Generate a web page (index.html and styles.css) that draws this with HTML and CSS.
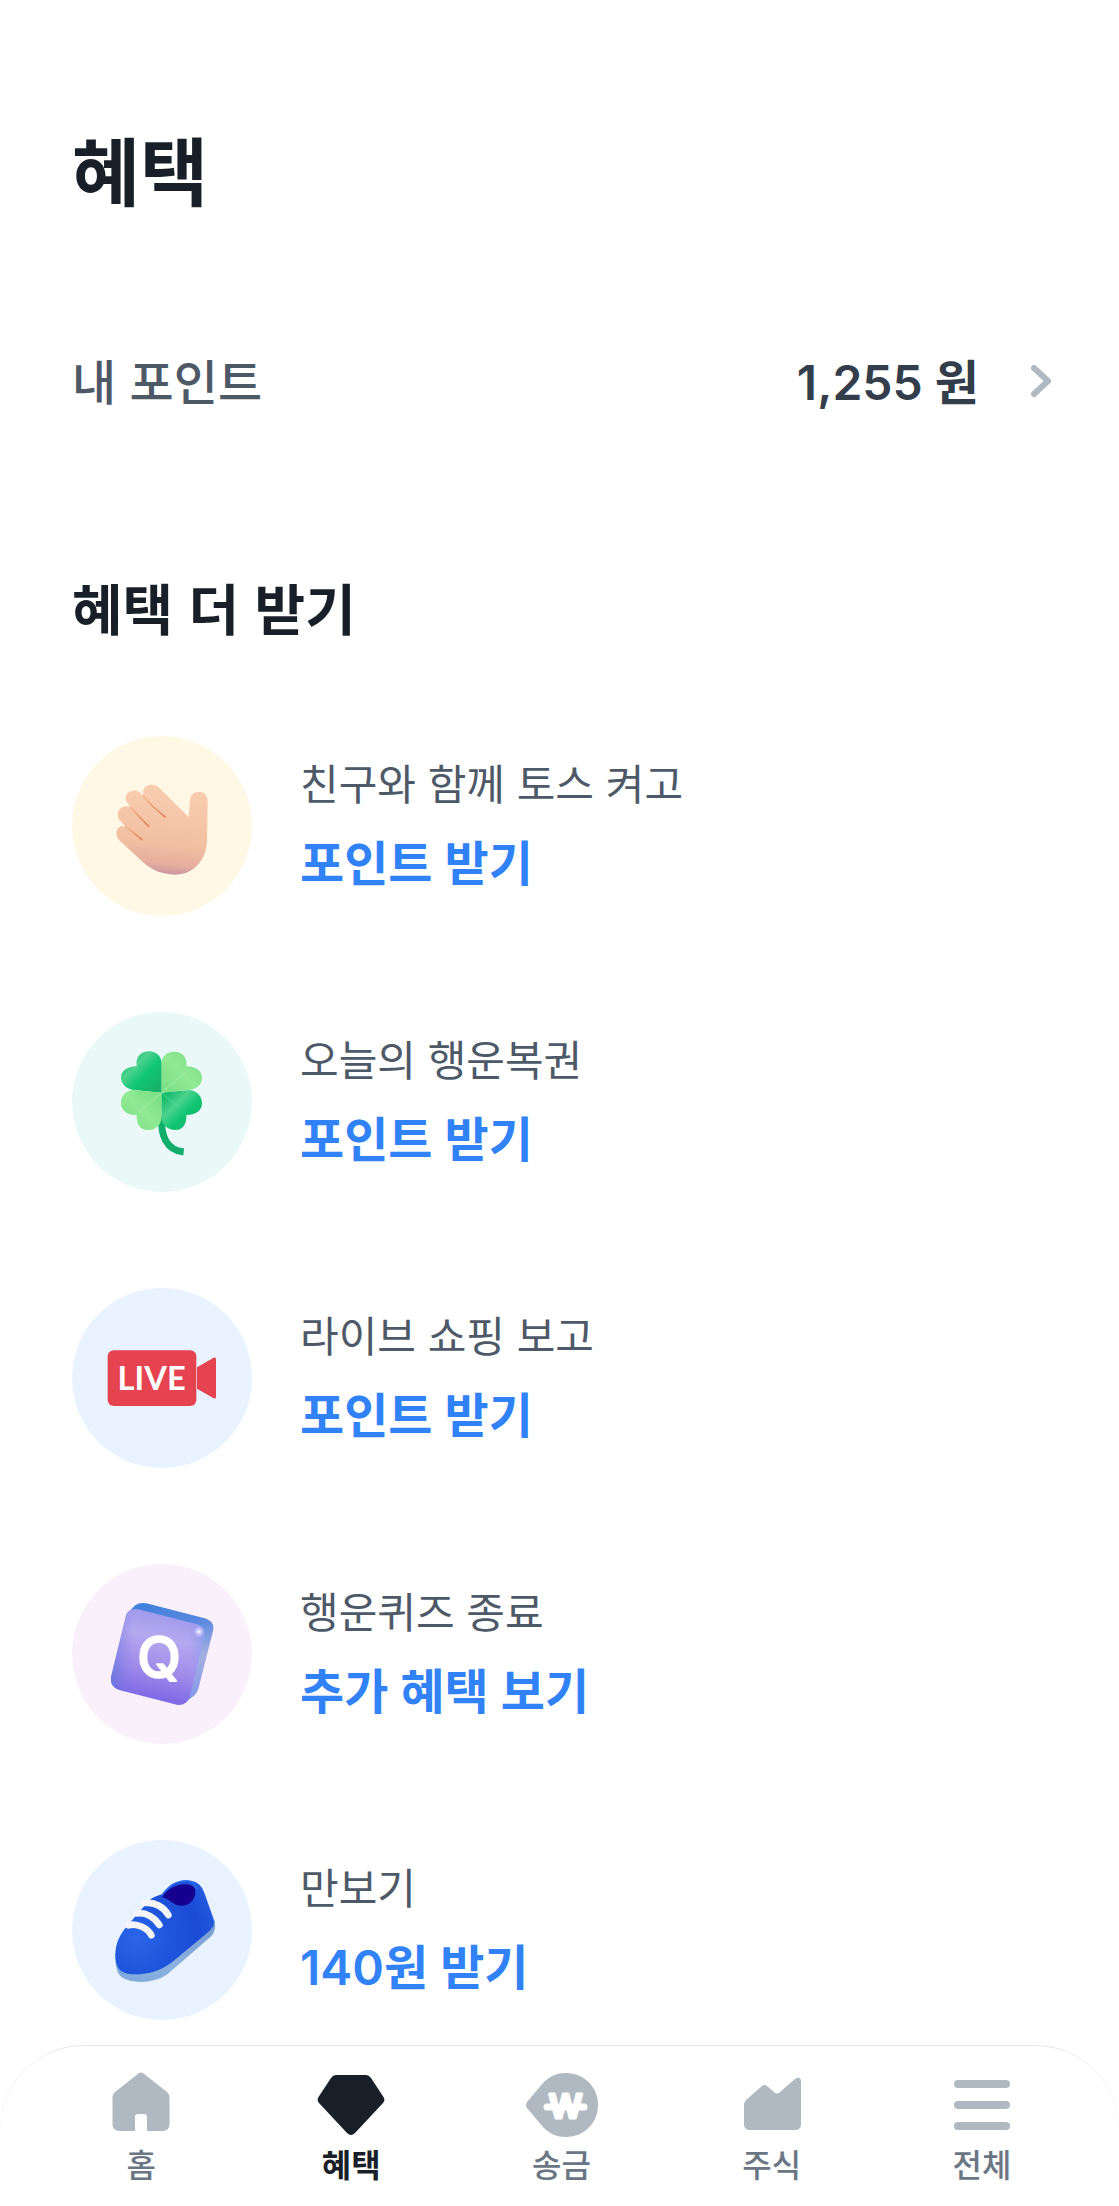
FILE: index.html
```
<!DOCTYPE html>
<html lang="ko">
<head>
<meta charset="UTF-8">
<meta name="viewport" content="width=device-width, initial-scale=1.0">
<title>혜택</title>
<link rel="stylesheet" href="styles.css">
</head>
<body>

<main class="content">
    <h1>혜택</h1>

    <a class="point" href="#">
        <span class="point-label">내 포인트</span>
        <span class="point-amount">1,255 원</span>
        <svg class="chevron" viewBox="0 0 24 36" aria-hidden="true">
            <path d="M3 5 L17 18 L3 31"/>
        </svg>
    </a>

    <h2>혜택 더 받기</h2>
    <ul class="benefits">
        <li>
            <a class="benefit" href="#">
                <svg class="badge yellow" viewBox="36 33 540 540" aria-hidden="true">
                    <defs>
                        <linearGradient id="skin" gradientUnits="userSpaceOnUse" x1="345" y1="220" x2="318" y2="450">
                            <stop offset="0" stop-color="#f8cbae"/>
                            <stop offset="0.6" stop-color="#f2bfa2"/>
                            <stop offset="0.86" stop-color="#e5ae9e"/>
                            <stop offset="1" stop-color="#c8929f"/>
                        </linearGradient>
                        <linearGradient id="crease" x1="0" y1="0" x2="1" y2="1">
                            <stop offset="0" stop-color="#f0b795"/>
                            <stop offset="1" stop-color="#e07f5c"/>
                        </linearGradient>
                    </defs>
                    <path fill="url(#skin)" d="M170 318 C172 305 186 300 198 306 L181 288 C160 262 185 235 212 246 L203 235 C184 211 214 187 239 202 L251 213 C240 186 273 169 296 187 L386 276 L390 226 C392 191 443 191 443 228 L441 350 C438 405 400 449 345 449 C305 448 275 436 246 409 L177 345 C169 336 168 326 170 318 Z"/>
                    <path class="crease" d="M250 212 C258 226 285 251 315 276"/>
                    <path class="crease" d="M210 246 L266 304"/>
                    <path class="crease" d="M197 305 C216 318 230 332 246 344"/>
                </svg>
                <span class="benefit-text">
                    <span class="benefit-desc">친구와 함께 토스 켜고</span>
                    <strong class="benefit-action">포인트 받기</strong>
                </span>
            </a>
        </li>
        <li>
            <a class="benefit" href="#">
                <svg class="badge mint" viewBox="36 36 540 540" aria-hidden="true">
                    <defs>
                        <linearGradient id="leafDark" x1="0" y1="0" x2="1" y2="1">
                            <stop offset="0.1" stop-color="#0fb968"/>
                            <stop offset="0.36" stop-color="#4cd28d"/>
                            <stop offset="0.58" stop-color="#10c574"/>
                            <stop offset="1" stop-color="#17ad67"/>
                        </linearGradient>
                        <linearGradient id="leafLight" x1="0" y1="1" x2="1" y2="0">
                            <stop offset="0" stop-color="#78dd84"/>
                            <stop offset="0.5" stop-color="#91e994"/>
                            <stop offset="1" stop-color="#75dd80"/>
                        </linearGradient>
                    </defs>
                    <path class="stem" d="M305 350 C302 405 319 451 371 456"/>
                    <path fill="url(#leafDark)" d="M305 278 L221 270 C196 267 183 249 183 232 C184 212 203 199 230 199 C226 170 244 154 267 154 C290 154 305 170 305 191 Z"/>
                    <path fill="url(#leafLight)" d="M305 278 L390 269 C414 266 426 250 426 233 C426 213 408 200 379 199 C383 171 366 155 343 155 C320 155 305 169 305 190 Z"/>
                    <path fill="url(#leafLight)" d="M305 278 L219 270 C196 272 183 290 183 309 C183 332 203 346 230 345 C228 373 242 390 263 390 C288 390 304 374 305 350 Z"/>
                    <path fill="url(#leafDark)" d="M305 278 L390 270 C412 272 426 290 426 310 C426 332 407 346 379 345 C381 373 367 390 347 390 C321 389 305 374 305 350 Z"/>
                    <path class="vein" d="M305 278 L375 218 M305 278 L238 335"/>
                    <path class="vein dark" d="M305 278 L355 322"/>
                </svg>
                <span class="benefit-text">
                    <span class="benefit-desc">오늘의 행운복권</span>
                    <strong class="benefit-action">포인트 받기</strong>
                </span>
            </a>
        </li>
        <li>
            <a class="benefit" href="#">
                <svg class="badge blue" viewBox="36 24 540 540" aria-hidden="true">
                    <path class="live-lens" d="M411 262 L461 233 Q468 230 468 238 L468 350 Q468 358 461 355 L411 326 Z"/>
                    <rect class="live-body" x="143" y="211" width="266" height="167" rx="18"/>
                    <text class="live-text" x="275" y="329">LIVE</text>
                </svg>
                <span class="benefit-text">
                    <span class="benefit-desc">라이브 쇼핑 보고</span>
                    <strong class="benefit-action">포인트 받기</strong>
                </span>
            </a>
        </li>
        <li>
            <a class="benefit" href="#">
                <svg class="badge purple" viewBox="36 27 540 540" aria-hidden="true">
                    <defs>
                        <linearGradient id="cubeSide" x1="0.4" y1="0" x2="0.6" y2="1">
                            <stop offset="0" stop-color="#4281dc"/>
                            <stop offset="0.25" stop-color="#5987df"/>
                            <stop offset="0.6" stop-color="#a6afe1"/>
                            <stop offset="1" stop-color="#8398ec"/>
                        </linearGradient>
                        <linearGradient id="cubeFace" x1="0.6" y1="0" x2="0.4" y2="1">
                            <stop offset="0" stop-color="#9c96ec"/>
                            <stop offset="0.3" stop-color="#b5a9ef"/>
                            <stop offset="0.65" stop-color="#9e89ea"/>
                            <stop offset="0.92" stop-color="#806ae5"/>
                            <stop offset="1" stop-color="#779cf3"/>
                        </linearGradient>
                        <linearGradient id="cubeEdge" x1="0" y1="0" x2="1" y2="0">
                            <stop offset="0" stop-color="#557bdc" stop-opacity="0.6"/>
                            <stop offset="0.24" stop-color="#7b75e3" stop-opacity="0"/>
                            <stop offset="0.82" stop-color="#a999f0" stop-opacity="0"/>
                            <stop offset="1" stop-color="#7b9df0" stop-opacity="0.7"/>
                        </linearGradient>
                        <radialGradient id="cubeGlow">
                            <stop offset="0" stop-color="#ffffff"/>
                            <stop offset="0.35" stop-color="#e5e2ff" stop-opacity="0.7"/>
                            <stop offset="1" stop-color="#c5bef5" stop-opacity="0"/>
                        </radialGradient>
                        <path id="face" d="M235 163 L408 207 Q439 215 432 246 L391 419 Q383 454 350 449 L178 405 Q149 396 153 366 L196 188 Q202 158 235 163 Z"/>
                    </defs>
                    <path fill="url(#cubeSide)" d="M226 151 Q240 141 259 145 L431 189 Q466 198 459 229 L415 401 Q410 417 398 425 L376 442 L197 220 L199 177 Z"/>
                    <use href="#face" fill="url(#cubeFace)"/>
                    <use href="#face" fill="url(#cubeEdge)"/>
                    <circle cx="417" cy="230" r="18" fill="url(#cubeGlow)"/>
                    <text class="quiz-text" x="297" y="369">Q</text>
                </svg>
                <span class="benefit-text">
                    <span class="benefit-desc">행운퀴즈 종료</span>
                    <strong class="benefit-action">추가 혜택 보기</strong>
                </span>
            </a>
        </li>
        <li>
            <a class="benefit" href="#">
                <svg class="badge blue" viewBox="36 30 540 540" aria-hidden="true">
                    <defs>
                        <radialGradient id="shoe" gradientUnits="userSpaceOnUse" cx="230" cy="325" r="250">
                            <stop offset="0" stop-color="#2b65ea"/>
                            <stop offset="0.4" stop-color="#1f55dc"/>
                            <stop offset="0.75" stop-color="#1c4bd6"/>
                            <stop offset="1" stop-color="#225bdf"/>
                        </radialGradient>
                        <linearGradient id="sole" x1="0" y1="1" x2="1" y2="0">
                            <stop offset="0" stop-color="#7da8dc"/>
                            <stop offset="0.4" stop-color="#8ab1df"/>
                            <stop offset="1" stop-color="#789bce"/>
                        </linearGradient>
                    </defs>
                    <path fill="url(#sole)" d="M166 370 C166 410 169 433 190 445 C222 461 282 461 322 433 L452 320 C465 308 467 292 464 271 Z"/>
                    <path fill="url(#shoe)" d="M166 374 C167 335 183 309 203 286 L269 210 C283 199 294 198 305 193 C325 167 352 151 380 151 C408 152 423 163 433 188 L461 268 C464 286 458 294 445 306 L334 398 C296 426 258 434 215 433 C178 430 166 410 166 374 Z"/>
                    <path class="shoe-rim" d="M306 198 C324 168 351 152 380 153 C398 154 408 164 413 177"/>
                    <path fill="#160091" d="M306 201 C325 174 350 163 377 163 C398 163 408 174 406 189 C403 211 388 227 365 227 C340 227 331 208 306 201 Z"/>
                    <path class="lace" d="M256 219 C285 215 313 233 325 255"/>
                    <path class="lace" d="M231 250 C260 247 285 263 298 285"/>
                    <path class="lace" d="M205 286 C232 278 264 296 274 316"/>
                </svg>
                <span class="benefit-text">
                    <span class="benefit-desc">만보기</span>
                    <strong class="benefit-action">140원 받기</strong>
                </span>
            </a>
        </li>
    </ul>
</main>

<nav class="tabbar">
    <a class="tab" href="#">
        <svg viewBox="0 0 72 66" aria-hidden="true">
            <path d="M33.500 1.500 Q36 -0.500 38.500 1.500 L62 20 Q64.500 22 64.500 25 V52 Q64.500 59 57.500 59 H42 V45 Q42 42 39 42 H33 Q30 42 30 45 V59 H14.500 Q7.500 59 7.500 52 V25 Q7.500 22 10 20 Z"/>
        </svg>
        <span>홈</span>
    </a>
    <a class="tab active" href="#" aria-current="page">
        <svg viewBox="0 0 72 66" aria-hidden="true">
            <path d="M21 3 H51 Q54 3 56 6 L68.500 25 Q70.500 28 68 31 L40 61 Q36 65 32 61 L4 31 Q1.500 28 3.500 25 L16 6 Q18 3 21 3 Z"/>
        </svg>
        <span>혜택</span>
    </a>
    <a class="tab" href="#">
        <svg viewBox="0 0 72 66" aria-hidden="true">
            <path d="M17 11 C24 4 31 1 40 1 C58 1 72 15 72 33 C72 51 58 65 40 65 C31 65 24 62 17 55 L1 36 Q-1 33 1 30 Z"/>
            <path class="won-bar" d="M21 35 H58"/>
            <text class="won" x="39.500" y="46">W</text>
        </svg>
        <span>송금</span>
    </a>
    <a class="tab" href="#">
        <svg viewBox="0 0 72 66" aria-hidden="true">
            <path d="M8 34 Q8 30 10 28 L26 14 Q28.500 12 31 14 L38 20 Q41 23 44 20 L59 7 Q64 3 65 9 V52 Q65 58 59 58 H14 Q8 58 8 52 Z"/>
        </svg>
        <span>주식</span>
    </a>
    <a class="tab" href="#">
        <svg viewBox="0 0 72 66" aria-hidden="true">
            <path d="M12 8 H60 A4 4 0 0 1 60 16 H12 A4 4 0 0 1 12 8 Z M12 29 H60 A4 4 0 0 1 60 37 H12 A4 4 0 0 1 12 29 Z M12 50 H60 A4 4 0 0 1 60 58 H12 A4 4 0 0 1 12 50 Z"/>
        </svg>
        <span>전체</span>
    </a>
</nav>

</body>
</html>
```
FILE: styles.css
```
* {
    box-sizing: border-box;
}
body {
    display: flex;
    flex-direction: column;
    min-height: 100vh;
    margin: 0;
    background-color: #fff;
    color: #191f28;
    font-family: 'Noto Sans CJK KR', sans-serif;
}
a {
    color: inherit;
    text-decoration: none;
}
.content {
    padding: 120px 64px 0 72px;
}
h1 {
    margin: 0;
    font-size: 74px;
    line-height: 96px;
    font-weight: 700;
}
h2 {
    margin: 151px 0 94px;
    font-size: 55px;
    line-height: 72px;
    font-weight: 700;
}

/* 내 포인트 */
.point {
    display: flex;
    align-items: baseline;
    margin-top: 127px;
    font-size: 48px;
    line-height: 72px;
    font-weight: 500;
}
.point-label {
    flex: 1;
    color: #4e5968;
}
.point-amount {
    color: #333d4b;
    font-family: 'Inter', 'Noto Sans CJK KR', sans-serif;
    font-weight: 600;
}
.chevron {
    align-self: center;
    width: 24px;
    height: 36px;
    margin-left: 52px;
    fill: none;
    stroke: #b0b8c1;
    stroke-width: 6;
    stroke-linecap: round;
    stroke-linejoin: round;
}

/* 혜택 목록 */
.benefits {
    display: flex;
    flex-direction: column;
    gap: 96px;
    margin: 0;
    padding: 0;
    list-style: none;
}
.benefit {
    display: flex;
    align-items: center;
    gap: 48px;
}
.badge {
    flex: none;
    width: 180px;
    height: 180px;
    border-radius: 50%;
}
.yellow {
    background-color: #fff8e5;
}
.mint {
    background-color: #ebf8f8;
}
.blue {
    background-color: #e8f3ff;
}
.purple {
    background-color: #f9f0fc;
}
.benefit-text {
    display: flex;
    flex-direction: column;
    gap: 12px;
    padding-bottom: 4px;
}
.benefit-desc {
    color: #4e5968;
    font-size: 42px;
    line-height: 68px;
}
.benefit-action {
    color: #3182f6;
    font-family: 'Inter', 'Noto Sans CJK KR', sans-serif;
    font-size: 48px;
    line-height: 72px;
    font-weight: 600;
}

/* 아이콘 */
.crease {
    fill: none;
    stroke: url(#crease);
    stroke-width: 5;
    stroke-linecap: round;
}
.stem {
    fill: none;
    stroke: #10ad6b;
    stroke-width: 21;
}
.vein {
    fill: none;
    stroke: #a5efa5;
    stroke-width: 4;
    stroke-linecap: round;
    opacity: 0.6;
}
.vein.dark {
    stroke: #4fdc98;
}
.live-body,
.live-lens {
    fill: #e5434f;
}
.live-text {
    fill: #fff;
    font-family: 'Lato', sans-serif;
    font-size: 98px;
    font-weight: 700;
    text-anchor: middle;
}
.quiz-text {
    fill: #fff;
    stroke: #fff;
    stroke-width: 5;
    stroke-linejoin: round;
    font-family: 'Inter', sans-serif;
    font-size: 172px;
    font-weight: 500;
    text-anchor: middle;
}
.shoe-rim {
    fill: none;
    stroke: #286ae9;
    stroke-width: 5;
}
.lace {
    fill: none;
    stroke: #f5f5f7;
    stroke-width: 20;
    stroke-linecap: round;
}

/* 하단 탭 */
.tabbar {
    position: sticky;
    bottom: 0;
    display: flex;
    height: 161px;
    margin-top: auto;
    padding: 26px 32px 0 36px;
    background-color: #fff;
    border-top: 1px solid #e5e8eb;
    border-radius: 84px 84px 0 0;
}
.tab {
    display: flex;
    flex: 1;
    flex-direction: column;
    align-items: center;
    color: #6b7684;
    font-size: 32px;
    line-height: 40px;
    font-weight: 500;
}
.tab svg {
    width: 72px;
    height: 66px;
    margin-bottom: 5px;
    fill: #b0b8c1;
}
.tab.active {
    color: #191f28;
    font-weight: 700;
}
.tab.active svg {
    fill: #191f28;
}
.tab .won-bar {
    stroke: #fff;
    stroke-width: 7;
    stroke-linecap: round;
}
.tab .won {
    fill: #fff;
    stroke: #fff;
    stroke-width: 3;
    stroke-linejoin: round;
    font-family: 'Inter', sans-serif;
    font-size: 33px;
    font-weight: 600;
    text-anchor: middle;
}
```
